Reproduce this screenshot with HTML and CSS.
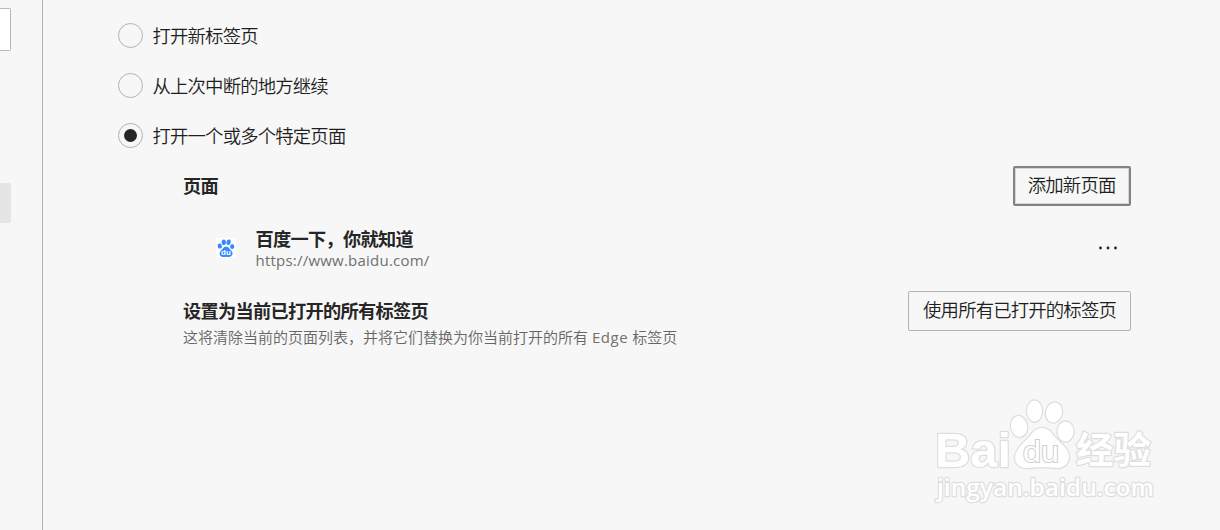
FILE: index.html
```html
<!DOCTYPE html>
<html lang="zh-CN">
<head>
  <meta charset="UTF-8" />
  <meta name="viewport" content="width=device-width, initial-scale=1.0"/>
  <title>启动时</title>
  <link rel="stylesheet" href="styles.css">
</head>
<body>

  <!-- Sidebar edge -->
  <aside class="sidebar">
    <div class="search-box"></div>
    <div class="nav-active"></div>
  </aside>

  <main class="content">
    <!-- Startup options -->
    <label class="option"><input type="radio" name="startup" /><span>打开新标签页</span></label>
    <label class="option"><input type="radio" name="startup" /><span>从上次中断的地方继续</span></label>
    <label class="option"><input type="radio" name="startup" checked /><span>打开一个或多个特定页面</span></label>

    <div class="pages">
      <div class="row row-head">
        <h2>页面</h2>
        <button class="btn btn-focus">添加新页面</button>
      </div>

      <div class="row row-page">
        <svg class="favicon" viewBox="0 0 20 20">
          <g fill="#3388ff">
            <ellipse cx="3.8" cy="8" rx="2.1" ry="2.6" transform="rotate(-12 3.8 8)"/>
            <ellipse cx="7.8" cy="4.2" rx="2.1" ry="2.8"/>
            <ellipse cx="12.6" cy="4.3" rx="2.1" ry="2.8" transform="rotate(12 12.6 4.3)"/>
            <ellipse cx="16.2" cy="8.6" rx="2.1" ry="2.5"/>
            <path d="M10 8.4c2.200 0 3.300 2.200 5.400 4.400 2.800 3-.1 6.200-2.500 6.200-1.200 0-2-.3-2.900-.3s-1.700.3-2.900.3c-2.600 0-5-3.200-2.400-6.100C6.700 10.800 7.800 8.400 10 8.400z"/>
          </g>
          <text x="10" y="17.2" class="favicon-text">du</text>
        </svg>
        <div class="page-info">
          <h2>百度一下，你就知道</h2>
          <p class="url">https://www.baidu.com/</p>
        </div>
        <svg class="more" viewBox="0 0 20 4">
          <circle cx="2.5" cy="2" r="1.4"/>
          <circle cx="10" cy="2" r="1.4"/>
          <circle cx="17.5" cy="2" r="1.4"/>
        </svg>
      </div>

      <div class="row row-all">
        <div class="all-info">
          <h2>设置为当前已打开的所有标签页</h2>
          <p class="desc">这将清除当前的页面列表，并将它们替换为你当前打开的所有 <span class="latin">Edge</span> 标签页</p>
        </div>
        <button class="btn">使用所有已打开的标签页</button>
      </div>
    </div>
  </main>

  <!-- Watermark -->
  <svg class="watermark" viewBox="0 0 250 120">
    <g class="mark">
      <ellipse cx="99" cy="36.5" rx="8" ry="10.5" transform="rotate(-10 99 36.5)"/>
      <ellipse cx="114.5" cy="21" rx="7.5" ry="10.5"/>
      <ellipse cx="134" cy="22.5" rx="8" ry="10" transform="rotate(14 134 22.5)"/>
      <ellipse cx="145.5" cy="41.5" rx="8" ry="10"/>
      <path d="M122 38c6 0 9 4 12 8 4 5 9 8 13 14 5 9 0 18-10 18-6 0-9-1-15-1s-9 1-15 1c-10 0-15-8-10-17 3-6 9-10 13-15 3-4 6-8 12-8z"/>
      <text x="15" y="77" class="mark-bai" textLength="76" lengthAdjust="spacingAndGlyphs">Bai</text>
      <text x="156" y="73.5" class="mark-cn" textLength="75" lengthAdjust="spacingAndGlyphs">经验</text>
      <text x="17" y="106" class="mark-url" textLength="217" lengthAdjust="spacingAndGlyphs">jingyan.baidu.com</text>
    </g>
    <text x="103" y="72" class="mark-du" textLength="36" lengthAdjust="spacingAndGlyphs">du</text>
  </svg>

</body>
</html>
```
FILE: styles.css
```css
* {
  box-sizing: border-box;
}
body {
  margin: 0;
  height: 530px;
  display: flex;
  position: relative;
  overflow: hidden;
  background-color: #f7f7f7;
  color: #1f1f1f;
  font-family: "Noto Sans CJK SC", sans-serif;
  font-size: 18.4px;
  font-weight: 350;
  letter-spacing: -0.85px;
}
h2, p {
  margin: 0;
}
h2 {
  color: #262626;
  font-size: 18.2px;
  line-height: 24px;
  font-weight: 700;
  letter-spacing: -0.68px;
}
.sidebar {
  width: 43px;
  flex: none;
  padding-top: 8px;
  border-right: 1px solid #b3b3b3;
}
.search-box {
  width: 11px;
  height: 43px;
  background: #fff;
  border: 1px solid #b8b8b8;
  border-left: none;
  border-radius: 0 2px 2px 0;
}
.nav-active {
  width: 11px;
  height: 40px;
  margin-top: 132px;
  background: #e5e5e5;
  border-radius: 0 2px 2px 0;
}
.content {
  flex: 1;
  padding: 10px 89px 0 75px;
}
.option {
  display: flex;
  align-items: center;
  gap: 9.5px;
  height: 50px;
}
.option span {
  padding-bottom: 1px;
}
.option input {
  appearance: none;
  display: grid;
  place-items: center;
  width: 25px;
  height: 25px;
  margin: 0;
  border: 1px solid #b3b3b3;
  border-radius: 50%;
}
.option input:checked::before {
  content: "";
  width: 13px;
  height: 13px;
  border-radius: 50%;
  background: #262626;
}
.pages {
  padding-left: 65px;
}
.row {
  display: flex;
  align-items: center;
  justify-content: space-between;
}
.row-head {
  height: 52px;
}
.row-head h2 {
  padding-bottom: 2px;
}
.row-page {
  height: 73px;
  padding: 0 13px 2px 33px;
}
.row-all {
  height: 64px;
  align-items: flex-start;
  padding-top: 6px;
}
.all-info {
  padding-top: 7px;
}
.btn {
  height: 40px;
  padding: 0 14px 4px 14px;
  border: 1px solid #b3b3b3;
  border-radius: 2px;
  background: transparent;
  color: inherit;
  font: inherit;
  letter-spacing: inherit;
}
.btn-focus {
  border: 2px solid #838383;
  padding: 0 13.5px 4px 12.5px;
  box-shadow: inset 0 0 0 1px #d6d6d6;
}
.favicon {
  width: 20px;
  height: 20px;
  background: #fff;
}
.favicon-text {
  fill: #fff;
  font-family: "Liberation Sans", sans-serif;
  font-size: 8px;
  font-weight: 700;
  letter-spacing: 0;
  text-anchor: middle;
}
.page-info {
  flex: 1;
  margin-left: 19.5px;
}
.url, .desc {
  color: #707070;
  font-family: "Open Sans", "Noto Sans CJK SC", sans-serif;
  font-size: 15px;
  font-weight: 400;
  line-height: 20px;
  letter-spacing: 0.22px;
}
.desc {
  color: #666;
  font-weight: 350;
  letter-spacing: 0;
  margin-top: 5px;
}
.latin {
  color: #707070;
  font-weight: 400;
  letter-spacing: 0.6px;
}
.more {
  width: 20px;
  height: 4px;
  fill: #262626;
}
.watermark {
  position: absolute;
  left: 920px;
  top: 390px;
  width: 250px;
  height: 120px;
  letter-spacing: 0;
}
.mark {
  fill: #fff;
  stroke: #dedede;
  stroke-width: 2.5px;
  stroke-linejoin: round;
  paint-order: stroke;
}
.mark-bai {
  font-family: "Liberation Sans", sans-serif;
  font-size: 48px;
  font-weight: 700;
}
.mark-cn {
  font-family: "Noto Sans CJK SC", sans-serif;
  font-size: 37px;
  font-weight: 700;
}
.mark-url {
  font-family: "Open Sans", sans-serif;
  font-size: 24px;
  font-weight: 600;
}
.mark-du {
  fill: #fff;
  stroke: #d0d0d0;
  stroke-width: 2px;
  paint-order: stroke;
  font-family: "Liberation Sans", sans-serif;
  font-size: 30px;
  font-weight: 400;
}
```
